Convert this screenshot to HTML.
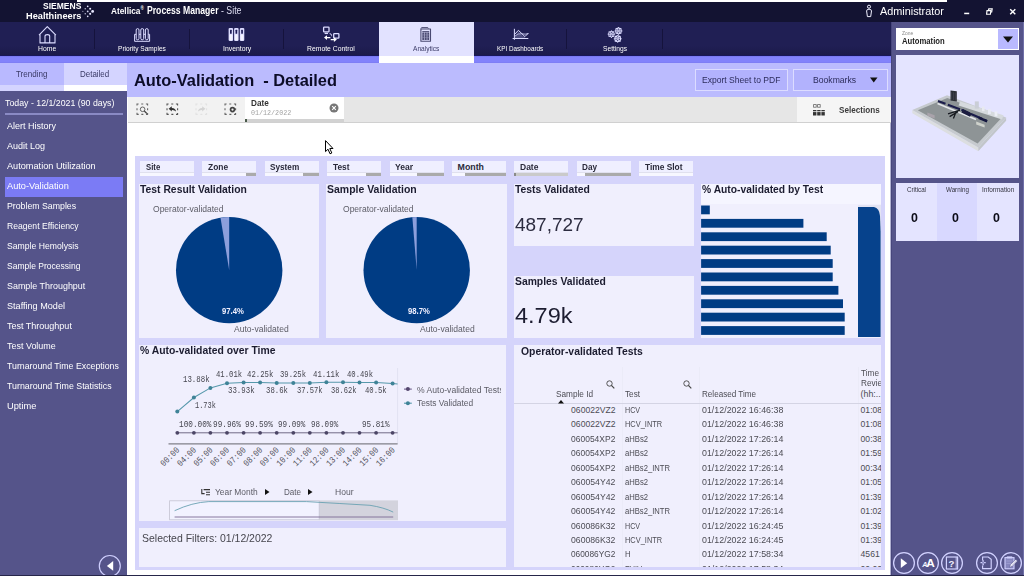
<!DOCTYPE html>
<html><head><meta charset="utf-8">
<style>
*{box-sizing:border-box;margin:0;padding:0}
html,body{width:1024px;height:576px;overflow:hidden;background:#fff;font-family:"Liberation Sans",sans-serif;}
.a{position:absolute}
.t{position:absolute;white-space:pre;line-height:1}
.m{font-family:"Liberation Mono",monospace}
#titlebar{left:0;top:0;width:1024px;height:22px;background:#131332}
#topwhite{left:77px;top:0;width:870px;height:2px;background:#fff}
#nav{left:0;top:22px;width:891px;height:34px;background:linear-gradient(#201f54 0,#201f54 70%,#1b1a4a 97%,#14126a 100%)}
#strip{left:0;top:56px;width:891px;height:7px;background:linear-gradient(#7474ee 0,#8282fb 1.5px,#8282fb 5.5px,#7c7cf2 7px)}
.sep{top:29px;width:1px;height:20px;background:#15133c}
#right{left:891px;top:22px;width:133px;height:553px;background:#55548a;border-left:1px solid #47467c;border-right:1.5px solid #7070a8}
#side{left:0;top:91px;width:127px;height:485px;background:#55548a}
#head{left:127px;top:63px;width:764px;height:34px;background:#bbbbfe}
#tool{left:128px;top:97px;width:763px;height:26px;background:#e6e6e6;border-bottom:1px solid #d0d0d0}
#dash{left:135px;top:156px;width:750px;height:414px;background:#d5d4fb}
.card{position:absolute;background:#f0effd}
.fb{position:absolute;top:161px;width:54px;height:15px;background:linear-gradient(#efefff 0,#efefff 11px,#e0e0ee 11px,#e0e0ee 12px,#f7f7ff 12px)}
.fb i{position:absolute;top:12px;right:0;height:3px;background:#a8a8a8}
.btn{position:absolute;top:69px;height:22px;border:1px solid #dcdcff;background:#b2b2fd;}
</style></head><body>
<div class="a" id="titlebar"></div>
<div class="a" id="topwhite"></div>
<div class="a" id="nav"></div>
<div class="a" id="strip"></div>
<div class="a" id="right"></div>
<div class="a" style="left:890px;top:97px;width:1px;height:478px;background:#b0b0d0"></div>
<div class="a" id="side"></div>
<div class="a" id="head"></div>
<div class="a" id="tool"></div>
<div class="a" id="dash"></div>

<div class="t" style="left:42.70px;top:2.27px;font-size:8.3px;color:#fff;font-weight:bold;transform:scaleX(1.0278);transform-origin:0 0;">SIEMENS</div>
<div class="t" style="left:25.70px;top:11.00px;font-size:9.8px;color:#fff;font-weight:bold;transform:scaleX(0.9418);transform-origin:0 0;">Healthineers</div>
<svg class="a" style="left:80px;top:3px" width="16" height="17" viewBox="80 3 16 17"><g fill="#e8e8ff"><circle cx="87.70" cy="6.30" r="0.85" opacity="1"/><circle cx="85.24" cy="8.76" r="0.75" opacity="0.8"/><circle cx="90.16" cy="8.76" r="1.05" opacity="1"/><circle cx="82.85" cy="11.40" r="0.6" opacity="0.6"/><circle cx="87.70" cy="11.40" r="0.9" opacity="0.9"/><circle cx="92.62" cy="11.40" r="1.4" opacity="1"/><circle cx="85.24" cy="13.86" r="0.75" opacity="0.8"/><circle cx="90.16" cy="13.86" r="1.05" opacity="1"/><circle cx="87.70" cy="16.32" r="0.85" opacity="0.95"/></g></svg>
<div class="t" style="left:111.00px;top:7.02px;font-size:8.6px;color:#fff;font-weight:bold;transform:scaleX(0.9643);transform-origin:0 0;">Atellica</div>
<div class="t" style="left:140.5px;top:6.5px;color:#fff;font-size:4.5px;font-weight:bold">®</div>
<div class="t" style="left:146.50px;top:5.84px;font-size:10px;color:#fff;font-weight:bold;transform:scaleX(0.8633);transform-origin:0 0;">Process Manager</div>
<div class="t" style="left:221.00px;top:5.84px;font-size:10px;color:#dcdcf0;transform:scaleX(0.8783);transform-origin:0 0;">- Site</div>
<svg class="a" style="left:864px;top:3px" width="10" height="16" viewBox="864 3 10 16"><g fill="none" stroke="#f0f0ff" stroke-width="1"><circle cx="869" cy="6.7" r="1.55"/><path d="M866.6 11 Q866.6 9.2 869 9.2 Q871.5 9.2 871.5 11 L870.7 16.6 H867.4 Z" stroke-linejoin="round"/></g></svg>
<div class="t" style="left:880.00px;top:5.55px;font-size:11.4px;color:#fff;transform:scaleX(0.9530);transform-origin:0 0;">Administrator</div>
<svg class="a" style="left:963px;top:11px" width="8" height="5" viewBox="963 11 8 5"><rect x="964.2" y="12.7" width="5" height="1.5" fill="#fff"/></svg>
<svg class="a" style="left:985px;top:7px" width="9" height="9" viewBox="985 7 9 9"><g fill="none" stroke="#fff" stroke-width="1.15"><path d="M988.4 10.4 L988.8 8.8 H992.2 L991.7 12 H990.8"/><path d="M987 10.6 H990.9 L990.4 14.2 H986.6 Z"/></g></svg>
<svg class="a" style="left:1009px;top:8px" width="8" height="8" viewBox="1009 8 8 8"><path d="M1010.2 9.2 L1015.3 14.2 M1015.3 9.2 L1010.2 14.2" stroke="#fff" stroke-width="1.4"/></svg>
<div class="a" style="left:379px;top:22px;width:95px;height:34px;background:#e2e2ff"></div>
<div class="a" style="left:379px;top:56px;width:95px;height:7px;background:#fff"></div>
<div class="t" style="left:38.20px;top:45.31px;font-size:7.9px;color:#fff;transform:scaleX(0.8636);transform-origin:0 0;">Home</div>
<div class="t" style="left:118.00px;top:45.31px;font-size:7.9px;color:#fff;transform:scaleX(0.8329);transform-origin:0 0;">Priority Samples</div>
<div class="t" style="left:222.50px;top:45.31px;font-size:7.9px;color:#fff;transform:scaleX(0.8678);transform-origin:0 0;">Inventory</div>
<div class="t" style="left:307.30px;top:45.31px;font-size:7.9px;color:#fff;transform:scaleX(0.8658);transform-origin:0 0;">Remote Control</div>
<div class="t" style="left:412.75px;top:45.31px;font-size:7.9px;color:#3a3a66;transform:scaleX(0.8320);transform-origin:0 0;">Analytics</div>
<div class="t" style="left:497.40px;top:45.31px;font-size:7.9px;color:#fff;transform:scaleX(0.8048);transform-origin:0 0;">KPI Dashboards</div>
<div class="t" style="left:603.15px;top:45.31px;font-size:7.9px;color:#fff;transform:scaleX(0.8443);transform-origin:0 0;">Settings</div>
<div class="a sep" style="left:94px"></div>
<div class="a sep" style="left:189px"></div>
<div class="a sep" style="left:283px"></div>
<div class="a sep" style="left:566px"></div>
<div class="a sep" style="left:662px"></div>
<svg class="a" style="left:0;top:22px" width="891" height="34" viewBox="0 22 891 34"><g fill="none" stroke="#dcdcff" stroke-width="1.1" stroke-linejoin="round"><path d="M39 35.2 L47.3 26.6 L55.9 35.2 M40 34.4 V42.9 H55 V34.4"/><path d="M45 42.9 V36.2 Q45 34.6 47.4 34.6 Q49.7 34.6 49.7 36.2 V42.9"/></g><g fill="none" stroke="#dcdcff" stroke-width="1"><rect x="136.2" y="28.6" width="2.8" height="11.2" rx="1.4"/><rect x="140.8" y="28.6" width="2.9" height="11.2" rx="1.4"/><rect x="145.4" y="28.6" width="2.8" height="11.2" rx="1.4"/><path d="M136.2 34.3 H134.6 V41.3 H149.6 V34.3 H148.2 M139 34.3 H140.8 M143.7 34.3 H145.4"/></g><rect x="228.6" y="27.9" width="4.5" height="13.1" rx="1.2" fill="#dcdcff"/><rect x="230.0" y="29.8" width="1.7" height="4" rx="0.5" fill="#1f1d57"/><rect x="229.5" y="34.6" width="2.7" height="5.6" rx="0.6" fill="#f4f4ff"/><rect x="234.1" y="27.9" width="4.5" height="13.1" rx="1.2" fill="#dcdcff"/><rect x="235.5" y="29.8" width="1.7" height="4" rx="0.5" fill="#1f1d57"/><rect x="235.0" y="34.6" width="2.7" height="5.6" rx="0.6" fill="#f4f4ff"/><rect x="239.8" y="27.9" width="4.5" height="13.1" rx="1.2" fill="#dcdcff"/><rect x="241.20000000000002" y="29.8" width="1.7" height="4" rx="0.5" fill="#1f1d57"/><rect x="240.70000000000002" y="34.6" width="2.7" height="5.6" rx="0.6" fill="#f4f4ff"/><g fill="none" stroke="#dcdcff" stroke-width="1.3"><rect x="323.6" y="27.2" width="5.4" height="4.6" rx="0.6"/><path d="M324.6 33.4 H328"/><rect x="333.7" y="33.6" width="5.2" height="4.6" rx="0.6"/><path d="M329.6 33.6 Q331.6 33.6 331.6 35.6 V36.2" stroke-width="1"/></g><g fill="#fff"><path d="M324 37.6 L327 35.2 V36.9 H330.4 V38.3 H327 V40 Z"/><path d="M336.9 39.6 L333.9 37.2 V38.9 H330.7 V40.3 H333.9 V42 Z"/></g><g fill="none" stroke="#4a4a72" stroke-width="1.1"><path d="M420.9 29 H430.5 V41.3 H420.9 Z" stroke-linejoin="round"/><path d="M421 28.6 L421.6 27.6 H427.8 L428.3 28.6" stroke-width="1"/><path d="M422.3 31.5 H429.2" stroke-width="0.9"/></g><rect x="422.3" y="32.4" width="6.9" height="7.6" fill="#4a4a72"/><path d="M424.45 32.4 V40 M427 32.4 V40" stroke="#e2e2ff" stroke-width="0.55"/><path d="M422.3 34.9 H429.2 M422.3 37.4 H429.2" stroke="#a0a0c0" stroke-width="0.45"/><g fill="none" stroke="#dcdcff" stroke-width="1"><path d="M514.4 28.8 V39.8 M512.6 38.5 H528.3"/><path d="M514.6 34.4 L518.4 30.3 L524.9 36.6 L528.3 33.2" stroke-linejoin="round"/><path d="M515 36 Q518 33.2 521.5 33.8 Q525.5 34.6 528.3 33.6" stroke-width="0.8"/></g><path d="M515 38 V35.5 L518.4 31.5 L523 36 L524.9 37.2 L525.5 38 Z" fill="#8a8ab8" opacity="0.45"/><circle cx="611.4" cy="34.1" r="3.2" fill="#dcdcff"/><circle cx="614.70" cy="34.10" r="0.55" fill="#dcdcff"/><circle cx="613.73" cy="36.43" r="0.55" fill="#dcdcff"/><circle cx="611.40" cy="37.40" r="0.55" fill="#dcdcff"/><circle cx="609.07" cy="36.43" r="0.55" fill="#dcdcff"/><circle cx="608.10" cy="34.10" r="0.55" fill="#dcdcff"/><circle cx="609.07" cy="31.77" r="0.55" fill="#dcdcff"/><circle cx="611.40" cy="30.80" r="0.55" fill="#dcdcff"/><circle cx="613.73" cy="31.77" r="0.55" fill="#dcdcff"/><circle cx="613.00" cy="35.02" r="0.62" fill="#1f1d57"/><circle cx="611.40" cy="35.95" r="0.62" fill="#1f1d57"/><circle cx="609.80" cy="35.02" r="0.62" fill="#1f1d57"/><circle cx="609.80" cy="33.18" r="0.62" fill="#1f1d57"/><circle cx="611.40" cy="32.25" r="0.62" fill="#1f1d57"/><circle cx="613.00" cy="33.17" r="0.62" fill="#1f1d57"/><circle cx="611.4" cy="34.1" r="0.95" fill="#a8a8cc"/><circle cx="618.5" cy="30.9" r="3.3" fill="#dcdcff"/><circle cx="621.90" cy="30.90" r="0.55" fill="#dcdcff"/><circle cx="620.90" cy="33.30" r="0.55" fill="#dcdcff"/><circle cx="618.50" cy="34.30" r="0.55" fill="#dcdcff"/><circle cx="616.10" cy="33.30" r="0.55" fill="#dcdcff"/><circle cx="615.10" cy="30.90" r="0.55" fill="#dcdcff"/><circle cx="616.10" cy="28.50" r="0.55" fill="#dcdcff"/><circle cx="618.50" cy="27.50" r="0.55" fill="#dcdcff"/><circle cx="620.90" cy="28.50" r="0.55" fill="#dcdcff"/><circle cx="620.10" cy="31.82" r="0.62" fill="#1f1d57"/><circle cx="618.50" cy="32.75" r="0.62" fill="#1f1d57"/><circle cx="616.90" cy="31.82" r="0.62" fill="#1f1d57"/><circle cx="616.90" cy="29.97" r="0.62" fill="#1f1d57"/><circle cx="618.50" cy="29.05" r="0.62" fill="#1f1d57"/><circle cx="620.10" cy="29.97" r="0.62" fill="#1f1d57"/><circle cx="618.5" cy="30.9" r="0.95" fill="#a8a8cc"/><circle cx="617.7" cy="38.7" r="3.4" fill="#dcdcff"/><circle cx="621.20" cy="38.70" r="0.55" fill="#dcdcff"/><circle cx="620.17" cy="41.17" r="0.55" fill="#dcdcff"/><circle cx="617.70" cy="42.20" r="0.55" fill="#dcdcff"/><circle cx="615.23" cy="41.17" r="0.55" fill="#dcdcff"/><circle cx="614.20" cy="38.70" r="0.55" fill="#dcdcff"/><circle cx="615.23" cy="36.23" r="0.55" fill="#dcdcff"/><circle cx="617.70" cy="35.20" r="0.55" fill="#dcdcff"/><circle cx="620.17" cy="36.23" r="0.55" fill="#dcdcff"/><circle cx="619.30" cy="39.62" r="0.62" fill="#1f1d57"/><circle cx="617.70" cy="40.55" r="0.62" fill="#1f1d57"/><circle cx="616.10" cy="39.62" r="0.62" fill="#1f1d57"/><circle cx="616.10" cy="37.78" r="0.62" fill="#1f1d57"/><circle cx="617.70" cy="36.85" r="0.62" fill="#1f1d57"/><circle cx="619.30" cy="37.77" r="0.62" fill="#1f1d57"/><circle cx="617.7" cy="38.7" r="0.95" fill="#a8a8cc"/></svg>
<div class="a" style="left:0;top:63px;width:64px;height:28px;background:#b9b9ff"></div>
<div class="a" style="left:0;top:85px;width:64px;height:6px;background:#d4d4ff"></div>
<div class="a" style="left:64px;top:63px;width:63px;height:28px;background:#d4d4ff"></div>
<div class="a" style="left:64px;top:85px;width:63px;height:6px;background:#fff"></div>
<div class="t" style="left:15.75px;top:69.55px;font-size:8.8px;color:#3a3a66;transform:scaleX(0.9155);transform-origin:0 0;">Trending</div>
<div class="t" style="left:80.40px;top:69.55px;font-size:8.8px;color:#3a3a66;transform:scaleX(0.9044);transform-origin:0 0;">Detailed</div>
<div class="t" style="left:4.80px;top:98.42px;font-size:9.9px;color:#fff;transform:scaleX(0.8899);transform-origin:0 0;">Today - 12/1/2021 (90 days)</div>
<div class="a" style="left:5px;top:113px;width:118px;height:1.5px;background:#8a8ac4"></div>
<div class="a" style="left:5px;top:176.5px;width:118px;height:20px;background:#7b7bf5"></div>
<div class="t" style="left:7.30px;top:121.40px;font-size:9.8px;color:#fff;transform:scaleX(0.9182);transform-origin:0 0;">Alert History</div>
<div class="t" style="left:7.30px;top:141.40px;font-size:9.8px;color:#fff;transform:scaleX(0.9200);transform-origin:0 0;">Audit Log</div>
<div class="t" style="left:7.30px;top:161.40px;font-size:9.8px;color:#fff;transform:scaleX(0.9358);transform-origin:0 0;">Automation Utilization</div>
<div class="t" style="left:7.30px;top:181.40px;font-size:9.8px;color:#fff;transform:scaleX(0.9401);transform-origin:0 0;">Auto-Validation</div>
<div class="t" style="left:7.30px;top:201.40px;font-size:9.8px;color:#fff;transform:scaleX(0.8934);transform-origin:0 0;">Problem Samples</div>
<div class="t" style="left:7.30px;top:221.40px;font-size:9.8px;color:#fff;transform:scaleX(0.8781);transform-origin:0 0;">Reagent Efficiency</div>
<div class="t" style="left:7.30px;top:241.40px;font-size:9.8px;color:#fff;transform:scaleX(0.8823);transform-origin:0 0;">Sample Hemolysis</div>
<div class="t" style="left:7.30px;top:261.40px;font-size:9.8px;color:#fff;transform:scaleX(0.8705);transform-origin:0 0;">Sample Processing</div>
<div class="t" style="left:7.30px;top:281.40px;font-size:9.8px;color:#fff;transform:scaleX(0.9115);transform-origin:0 0;">Sample Throughput</div>
<div class="t" style="left:7.30px;top:301.40px;font-size:9.8px;color:#fff;transform:scaleX(0.9284);transform-origin:0 0;">Staffing Model</div>
<div class="t" style="left:7.30px;top:321.40px;font-size:9.8px;color:#fff;transform:scaleX(0.9187);transform-origin:0 0;">Test Throughput</div>
<div class="t" style="left:7.30px;top:341.40px;font-size:9.8px;color:#fff;transform:scaleX(0.9141);transform-origin:0 0;">Test Volume</div>
<div class="t" style="left:7.30px;top:361.40px;font-size:9.8px;color:#fff;transform:scaleX(0.8957);transform-origin:0 0;">Turnaround Time Exceptions</div>
<div class="t" style="left:7.30px;top:381.40px;font-size:9.8px;color:#fff;transform:scaleX(0.9002);transform-origin:0 0;">Turnaround Time Statistics</div>
<div class="t" style="left:7.30px;top:401.40px;font-size:9.8px;color:#fff;transform:scaleX(0.9471);transform-origin:0 0;">Uptime</div>
<svg class="a" style="left:98px;top:553.5px" width="24" height="24" viewBox="0 0 24 24"><circle cx="11.8" cy="12" r="10.5" fill="none" stroke="#d0d0ff" stroke-width="1.2"/><path d="M15.2 7.1 V16.7 L8.9 11.9 Z" fill="#fff"/></svg>
<div class="t" style="left:134.40px;top:72.76px;font-size:16px;color:#0c0c28;font-weight:bold;transform:scaleX(1.0240);transform-origin:0 0;">Auto-Validation  - Detailed</div>
<div class="btn" style="left:695px;width:93px"></div>
<div class="t" style="left:702.40px;top:75.47px;font-size:9.6px;color:#2d2d5c;transform:scaleX(0.8905);transform-origin:0 0;">Export Sheet to PDF</div>
<div class="btn" style="left:793px;width:95px"></div>
<div class="t" style="left:812.50px;top:75.47px;font-size:9.6px;color:#2d2d5c;transform:scaleX(0.8976);transform-origin:0 0;">Bookmarks</div>
<svg class="a" style="left:869.5px;top:77px" width="8" height="6"><path d="M0 0.5 H7.5 L3.75 5.5 Z" fill="#111"/></svg>
<div class="a" style="left:128px;top:97px;width:117px;height:25px;background:#f2f2f2"></div>
<div class="a" style="left:245px;top:97px;width:99px;height:22px;background:#fff"></div>
<div class="a" style="left:245px;top:119px;width:99px;height:3px;background:#d2d2d2"></div>
<div class="a" style="left:245px;top:118.5px;width:1.6px;height:3.5px;background:#4a5a4a"></div>
<div class="a" style="left:797px;top:97px;width:94px;height:25px;background:#f5f5f5"></div>
<div class="t" style="left:251.10px;top:99.27px;font-size:8.9px;color:#333;font-weight:bold;transform:scaleX(0.9227);transform-origin:0 0;">Date</div>
<div class="t m" style="left:251.10px;top:109.66px;font-size:7.8px;color:#a2a2a2;transform:scaleX(0.8589);transform-origin:0 0;">01/12/2022</div>
<svg class="a" style="left:329px;top:103px" width="10" height="10" viewBox="0 0 10 10"><circle cx="5" cy="5" r="4.5" fill="#777"/><path d="M3.2 3.2 L6.8 6.8 M6.8 3.2 L3.2 6.8" stroke="#fff" stroke-width="1.1"/></svg>
<svg class="a" style="left:136px;top:103px" width="13" height="13" viewBox="0 0 13 13"><path d="M0.6 1 H12 M11.6 0.6 V11.8 M12 11.4 H0.6 M1 11.8 V0.6" fill="none" stroke="#666" stroke-width="1.1" stroke-dasharray="2 2.65"/><circle cx="6.6" cy="6.3" r="2.3" fill="#f2f2f2" stroke="#555" stroke-width="0.9"/><path d="M8.3 8.1 L10.8 10.4" stroke="#444" stroke-width="1.3"/></svg>
<svg class="a" style="left:165.6px;top:103px" width="13" height="13" viewBox="0 0 13 13"><path d="M0.6 1 H12 M11.6 0.6 V11.8 M12 11.4 H0.6 M1 11.8 V0.6" fill="none" stroke="#555" stroke-width="1.1" stroke-dasharray="2 2.65"/><path d="M2.6 5.8 L5.8 3.2 V4.9 Q9.6 4.8 10 8.6 Q8.4 6.7 5.8 6.9 V8.4 Z" fill="#333"/></svg>
<svg class="a" style="left:194.6px;top:103px" width="13" height="13" viewBox="0 0 13 13"><path d="M0.6 1 H12 M11.6 0.6 V11.8 M12 11.4 H0.6 M1 11.8 V0.6" fill="none" stroke="#e2e2e2" stroke-width="1.1" stroke-dasharray="2 2.65"/><path d="M10.4 5.8 L7.2 3.2 V4.9 Q3.4 4.8 3 8.6 Q4.6 6.7 7.2 6.9 V8.4 Z" fill="#d4d4d4"/></svg>
<svg class="a" style="left:224.4px;top:103px" width="13" height="13" viewBox="0 0 13 13"><path d="M0.6 1 H12 M11.6 0.6 V11.8 M12 11.4 H0.6 M1 11.8 V0.6" fill="none" stroke="#666" stroke-width="1.1" stroke-dasharray="2 2.65"/><circle cx="8.5" cy="6.6" r="2.8" fill="#444"/><circle cx="8.5" cy="6.6" r="1.1" fill="#f2f2f2"/></svg>
<svg class="a" style="left:813px;top:104px" width="12" height="12" viewBox="0 0 12 12"><g fill="none" stroke="#666" stroke-width="0.8"><rect x="0.6" y="0.6" width="2.6" height="2.6"/><rect x="4.6" y="0.6" width="2.6" height="2.6"/></g><g fill="#333"><rect x="0" y="6" width="3.4" height="5.5"/><rect x="4.2" y="6" width="3.4" height="5.5"/><rect x="8.4" y="6" width="3.4" height="5.5"/></g><path d="M0 7.6 H12" stroke="#f5f5f5" stroke-width="0.8"/></svg>
<div class="t" style="left:839.00px;top:105.77px;font-size:8.9px;color:#3c3c3c;font-weight:bold;transform:scaleX(0.9165);transform-origin:0 0;">Selections</div>
<svg class="a" style="left:324px;top:139px" width="11" height="17" viewBox="0 0 11 17"><path d="M1.5 1.6 V12.6 L4 10.2 L6 14.8 L7.8 14 L5.8 9.5 H9 Z" fill="#fff" stroke="#000" stroke-width="1"/></svg>
<div class="fb" style="left:140.0px"></div>
<div class="t" style="left:145.60px;top:163.05px;font-size:8.8px;color:#2a2a3a;font-weight:bold;transform:scaleX(0.8798);transform-origin:0 0;">Site</div>
<div class="fb" style="left:202.4px"><i style="width:10px;background:#aaa"></i></div>
<div class="t" style="left:208.00px;top:163.05px;font-size:8.8px;color:#2a2a3a;font-weight:bold;transform:scaleX(0.9562);transform-origin:0 0;">Zone</div>
<div class="fb" style="left:264.8px"><i style="width:16px;background:#aaa"></i></div>
<div class="t" style="left:270.40px;top:163.05px;font-size:8.8px;color:#2a2a3a;font-weight:bold;transform:scaleX(0.9327);transform-origin:0 0;">System</div>
<div class="fb" style="left:327.2px"><i style="width:15px;background:#aaa"></i></div>
<div class="t" style="left:332.80px;top:163.05px;font-size:8.8px;color:#2a2a3a;font-weight:bold;transform:scaleX(0.9460);transform-origin:0 0;">Test</div>
<div class="fb" style="left:389.6px"><i style="width:27px;background:#aaa"></i></div>
<div class="t" style="left:395.20px;top:163.05px;font-size:8.8px;color:#2a2a3a;font-weight:bold;transform:scaleX(0.9786);transform-origin:0 0;">Year</div>
<div class="fb" style="left:452.0px"><i style="width:41px;background:#aaa"></i></div>
<div class="t" style="left:457.60px;top:163.05px;font-size:8.8px;color:#2a2a3a;font-weight:bold;">Month</div>
<div class="fb" style="left:514.4px"><i style="width:54px;background:#cacaca"></i><i style="width:2px;background:#8a8a8a;right:auto;left:0"></i></div>
<div class="t" style="left:520.00px;top:163.05px;font-size:8.8px;color:#2a2a3a;font-weight:bold;transform:scaleX(0.9646);transform-origin:0 0;">Date</div>
<div class="fb" style="left:576.8px"><i style="width:46px;background:#aaa"></i></div>
<div class="t" style="left:582.40px;top:163.05px;font-size:8.8px;color:#2a2a3a;font-weight:bold;transform:scaleX(0.9291);transform-origin:0 0;">Day</div>
<div class="fb" style="left:639.2px"></div>
<div class="t" style="left:644.80px;top:163.05px;font-size:8.8px;color:#2a2a3a;font-weight:bold;transform:scaleX(0.9507);transform-origin:0 0;">Time Slot</div>
<div class="card" style="left:139px;top:184px;width:180px;height:153.5px"></div>
<div class="card" style="left:326px;top:184px;width:181px;height:153.5px"></div>
<svg class="a" style="left:135px;top:156px" width="380" height="190" viewBox="135 156 380 190"><circle cx="229.2" cy="270.15" r="53.2" fill="#003c84"/><path d="M229.2 270.15 L220.51 217.66 A53.2 53.2 0 0 1 229.2 216.95 Z" fill="#8c9fdc"/><circle cx="416.7" cy="270.15" r="53.2" fill="#003c84"/><path d="M416.7 270.15 L412.34 217.13 A53.2 53.2 0 0 1 416.7 216.95 Z" fill="#8c9fdc"/></svg>
<div class="t" style="left:140.00px;top:185.34px;font-size:10.0px;color:#1c1c30;font-weight:bold;transform:scaleX(1.0352);transform-origin:0 0;">Test Result Validation</div>
<div class="t" style="left:327.00px;top:185.34px;font-size:10.0px;color:#1c1c30;font-weight:bold;transform:scaleX(1.0481);transform-origin:0 0;">Sample Validation</div>
<div class="t" style="left:153.30px;top:204.77px;font-size:8.9px;color:#5c5c66;transform:scaleX(0.9605);transform-origin:0 0;">Operator-validated</div>
<div class="t" style="left:343.00px;top:204.77px;font-size:8.9px;color:#5c5c66;transform:scaleX(0.9605);transform-origin:0 0;">Operator-validated</div>
<div class="t" style="left:234.30px;top:324.97px;font-size:8.9px;color:#5c5c66;transform:scaleX(0.9631);transform-origin:0 0;">Auto-validated</div>
<div class="t" style="left:419.50px;top:324.97px;font-size:8.9px;color:#5c5c66;transform:scaleX(0.9631);transform-origin:0 0;">Auto-validated</div>
<div class="t" style="left:221.70px;top:307.38px;font-size:9px;color:#f0f0ff;font-weight:bold;transform:scaleX(0.8582);transform-origin:0 0;">97.4%</div>
<div class="t" style="left:407.50px;top:307.38px;font-size:9px;color:#f0f0ff;font-weight:bold;transform:scaleX(0.8582);transform-origin:0 0;">98.7%</div>
<div class="card" style="left:514px;top:184px;width:180px;height:62px"></div>
<div class="card" style="left:514px;top:276px;width:180px;height:62px"></div>
<div class="t" style="left:514.50px;top:185.34px;font-size:10.0px;color:#1c1c30;font-weight:bold;transform:scaleX(1.0379);transform-origin:0 0;">Tests Validated</div>
<div class="t" style="left:514.50px;top:277.34px;font-size:10.0px;color:#1c1c30;font-weight:bold;transform:scaleX(1.0351);transform-origin:0 0;">Samples Validated</div>
<div class="t" style="left:514.50px;top:216.39px;font-size:18.2px;color:#2c2c40;transform:scaleX(1.0442);transform-origin:0 0;">487,727</div>
<div class="t" style="left:514.50px;top:306.40px;font-size:21.5px;color:#1c1c30;transform:scaleX(1.0932);transform-origin:0 0;">4.79k</div>
<div class="card" style="left:701px;top:184px;width:180px;height:153.5px"></div>
<div class="a" style="left:701px;top:184px;width:180px;height:20px;background:#f5f5ff"></div>
<div class="t" style="left:702.30px;top:185.34px;font-size:10.0px;color:#1c1c30;font-weight:bold;transform:scaleX(1.0289);transform-origin:0 0;">% Auto-validated by Test</div>
<svg class="a" style="left:700px;top:200px" width="160" height="140" viewBox="700 200 160 140"><rect x="701.1" y="205.50" width="8.7" height="8.8" fill="#003c84"/><rect x="701.1" y="218.90" width="102.3" height="8.8" fill="#003c84"/><rect x="701.1" y="232.30" width="125.6" height="8.8" fill="#003c84"/><rect x="701.1" y="245.70" width="129.6" height="8.8" fill="#003c84"/><rect x="701.1" y="259.10" width="131.6" height="8.8" fill="#003c84"/><rect x="701.1" y="272.50" width="131.6" height="8.8" fill="#003c84"/><rect x="701.1" y="285.90" width="137.3" height="8.8" fill="#003c84"/><rect x="701.1" y="299.30" width="141.9" height="8.8" fill="#003c84"/><rect x="701.1" y="312.70" width="143.6" height="8.8" fill="#003c84"/><rect x="701.1" y="326.10" width="143.6" height="8.8" fill="#003c84"/></svg>
<div class="a" style="left:858px;top:204.7px;width:22.6px;height:132.8px;background:#e2e3f3"></div>
<svg class="a" style="left:858px;top:206px" width="23" height="131" viewBox="0 0 23 131"><path d="M0 1.1 H16 Q21.3 2 22 10 L22.6 26 V131.5 H0 Z" fill="#06428c"/></svg>
<div class="card" style="left:139px;top:344.5px;width:367px;height:176.2px"></div>
<div class="t" style="left:139.70px;top:346.44px;font-size:10.0px;color:#1c1c30;font-weight:bold;transform:scaleX(1.0376);transform-origin:0 0;">% Auto-validated over Time</div>
<svg class="a" style="left:139px;top:344px" width="367" height="177" viewBox="139 344 367 177"><path d="M397.6 368 V444" stroke="#e2e2f2" stroke-width="1"/><polyline points="177.3,411.6 193.9,397.5 210.4,387.9 227.0,383.2 243.6,382.5 260.1,382.5 276.7,382.9 293.3,382.9 309.8,382.9 326.4,382.3 343.0,382.3 359.5,382.4 376.1,382.5 392.6,383.6 397.6,383.9" fill="none" stroke="#5598ab" stroke-width="1.05"/><circle cx="177.3" cy="411.6" r="2" fill="#3f8397"/><circle cx="193.9" cy="397.5" r="2" fill="#3f8397"/><circle cx="210.4" cy="387.9" r="2" fill="#3f8397"/><circle cx="227.0" cy="383.2" r="2" fill="#3f8397"/><circle cx="243.6" cy="382.5" r="2" fill="#3f8397"/><circle cx="260.1" cy="382.5" r="2" fill="#3f8397"/><circle cx="276.7" cy="382.9" r="2" fill="#3f8397"/><circle cx="293.3" cy="382.9" r="2" fill="#3f8397"/><circle cx="309.8" cy="382.9" r="2" fill="#3f8397"/><circle cx="326.4" cy="382.3" r="2" fill="#3f8397"/><circle cx="343.0" cy="382.3" r="2" fill="#3f8397"/><circle cx="359.5" cy="382.4" r="2" fill="#3f8397"/><circle cx="376.1" cy="382.5" r="2" fill="#3f8397"/><circle cx="392.6" cy="383.6" r="2" fill="#3f8397"/><path d="M176 432.8 H397.6" stroke="#6b6482" stroke-width="0.95"/><circle cx="177.3" cy="432.8" r="1.9" fill="#4c4666"/><circle cx="193.9" cy="432.8" r="1.9" fill="#4c4666"/><circle cx="210.4" cy="432.8" r="1.9" fill="#4c4666"/><circle cx="227.0" cy="432.8" r="1.9" fill="#4c4666"/><circle cx="243.6" cy="432.8" r="1.9" fill="#4c4666"/><circle cx="260.1" cy="432.8" r="1.9" fill="#4c4666"/><circle cx="276.7" cy="432.8" r="1.9" fill="#4c4666"/><circle cx="293.3" cy="432.8" r="1.9" fill="#4c4666"/><circle cx="309.8" cy="432.8" r="1.9" fill="#4c4666"/><circle cx="326.4" cy="432.8" r="1.9" fill="#4c4666"/><circle cx="343.0" cy="432.8" r="1.9" fill="#4c4666"/><circle cx="359.5" cy="432.8" r="1.9" fill="#4c4666"/><circle cx="376.1" cy="432.8" r="1.9" fill="#4c4666"/><circle cx="392.6" cy="432.8" r="1.9" fill="#4c4666"/><path d="M168.5 443.9 H397.6" stroke="#808088" stroke-width="1.3"/><path d="M404 389.1 H411.8" stroke="#6a5a88" stroke-width="1.1"/><circle cx="407.9" cy="389.1" r="2" fill="#54466e"/><path d="M404 403.2 H411.8" stroke="#4f94a8" stroke-width="1.1"/><circle cx="407.9" cy="403.2" r="2" fill="#3f8397"/><rect x="319.2" y="500.4" width="78.8" height="19.8" fill="#d3d3dd"/><rect x="169.6" y="500.8" width="149.6" height="19" fill="#f2f2ff" stroke="#c4c4d2" stroke-width="0.8"/><path d="M174.6 510.7 Q192 502.5 208.8 501.6 L306.5 501.6 Q340 503.5 370 505.3 Q384 507.5 393.2 512.1" fill="none" stroke="#6aa2b2" stroke-width="0.9"/><path d="M174.6 517 H393.2" stroke="#7a6a94" stroke-width="0.9"/><text x="180.1" y="450.6" text-anchor="end" transform="rotate(-45 180.1 450.6)" font-family="Liberation Mono" font-size="9" textLength="23" lengthAdjust="spacingAndGlyphs" fill="#52525c">00:00</text><text x="196.7" y="450.6" text-anchor="end" transform="rotate(-45 196.7 450.6)" font-family="Liberation Mono" font-size="9" textLength="23" lengthAdjust="spacingAndGlyphs" fill="#52525c">04:00</text><text x="213.2" y="450.6" text-anchor="end" transform="rotate(-45 213.2 450.6)" font-family="Liberation Mono" font-size="9" textLength="23" lengthAdjust="spacingAndGlyphs" fill="#52525c">05:00</text><text x="229.8" y="450.6" text-anchor="end" transform="rotate(-45 229.8 450.6)" font-family="Liberation Mono" font-size="9" textLength="23" lengthAdjust="spacingAndGlyphs" fill="#52525c">06:00</text><text x="246.4" y="450.6" text-anchor="end" transform="rotate(-45 246.4 450.6)" font-family="Liberation Mono" font-size="9" textLength="23" lengthAdjust="spacingAndGlyphs" fill="#52525c">07:00</text><text x="262.9" y="450.6" text-anchor="end" transform="rotate(-45 262.9 450.6)" font-family="Liberation Mono" font-size="9" textLength="23" lengthAdjust="spacingAndGlyphs" fill="#52525c">08:00</text><text x="279.5" y="450.6" text-anchor="end" transform="rotate(-45 279.5 450.6)" font-family="Liberation Mono" font-size="9" textLength="23" lengthAdjust="spacingAndGlyphs" fill="#52525c">09:00</text><text x="296.1" y="450.6" text-anchor="end" transform="rotate(-45 296.1 450.6)" font-family="Liberation Mono" font-size="9" textLength="23" lengthAdjust="spacingAndGlyphs" fill="#52525c">10:00</text><text x="312.6" y="450.6" text-anchor="end" transform="rotate(-45 312.6 450.6)" font-family="Liberation Mono" font-size="9" textLength="23" lengthAdjust="spacingAndGlyphs" fill="#52525c">11:00</text><text x="329.2" y="450.6" text-anchor="end" transform="rotate(-45 329.2 450.6)" font-family="Liberation Mono" font-size="9" textLength="23" lengthAdjust="spacingAndGlyphs" fill="#52525c">12:00</text><text x="345.8" y="450.6" text-anchor="end" transform="rotate(-45 345.8 450.6)" font-family="Liberation Mono" font-size="9" textLength="23" lengthAdjust="spacingAndGlyphs" fill="#52525c">13:00</text><text x="362.3" y="450.6" text-anchor="end" transform="rotate(-45 362.3 450.6)" font-family="Liberation Mono" font-size="9" textLength="23" lengthAdjust="spacingAndGlyphs" fill="#52525c">14:00</text><text x="378.9" y="450.6" text-anchor="end" transform="rotate(-45 378.9 450.6)" font-family="Liberation Mono" font-size="9" textLength="23" lengthAdjust="spacingAndGlyphs" fill="#52525c">15:00</text><text x="395.4" y="450.6" text-anchor="end" transform="rotate(-45 395.4 450.6)" font-family="Liberation Mono" font-size="9" textLength="23" lengthAdjust="spacingAndGlyphs" fill="#52525c">16:00</text></svg>
<div class="t m" style="left:183.30px;top:376.00px;font-size:9.0px;color:#46464f;transform:scaleX(0.8209);transform-origin:0 0;">13.88k</div>
<div class="t m" style="left:216.20px;top:370.80px;font-size:9.0px;color:#46464f;transform:scaleX(0.8055);transform-origin:0 0;">41.01k</div>
<div class="t m" style="left:247.00px;top:370.80px;font-size:9.0px;color:#46464f;transform:scaleX(0.8116);transform-origin:0 0;">42.25k</div>
<div class="t m" style="left:280.40px;top:370.80px;font-size:9.0px;color:#46464f;transform:scaleX(0.8024);transform-origin:0 0;">39.25k</div>
<div class="t m" style="left:313.40px;top:370.80px;font-size:9.0px;color:#46464f;transform:scaleX(0.8147);transform-origin:0 0;">41.11k</div>
<div class="t m" style="left:346.60px;top:370.80px;font-size:9.0px;color:#46464f;transform:scaleX(0.8024);transform-origin:0 0;">40.49k</div>
<div class="t m" style="left:228.20px;top:387.30px;font-size:9.0px;color:#46464f;transform:scaleX(0.8209);transform-origin:0 0;">33.93k</div>
<div class="t m" style="left:265.90px;top:387.30px;font-size:9.0px;color:#46464f;transform:scaleX(0.8110);transform-origin:0 0;">38.6k</div>
<div class="t m" style="left:297.10px;top:387.30px;font-size:9.0px;color:#46464f;transform:scaleX(0.7900);transform-origin:0 0;">37.57k</div>
<div class="t m" style="left:330.50px;top:387.30px;font-size:9.0px;color:#46464f;transform:scaleX(0.7838);transform-origin:0 0;">38.62k</div>
<div class="t m" style="left:365.20px;top:387.30px;font-size:9.0px;color:#46464f;transform:scaleX(0.8036);transform-origin:0 0;">40.5k</div>
<div class="t m" style="left:195.40px;top:402.00px;font-size:9.0px;color:#46464f;transform:scaleX(0.7703);transform-origin:0 0;">1.73k</div>
<div class="t m" style="left:178.70px;top:421.30px;font-size:9.0px;color:#46464f;transform:scaleX(0.8597);transform-origin:0 0;">100.00%</div>
<div class="t m" style="left:213.00px;top:421.30px;font-size:9.0px;color:#46464f;transform:scaleX(0.8579);transform-origin:0 0;">99.96%</div>
<div class="t m" style="left:244.60px;top:421.30px;font-size:9.0px;color:#46464f;transform:scaleX(0.8579);transform-origin:0 0;">99.59%</div>
<div class="t m" style="left:278.00px;top:421.30px;font-size:9.0px;color:#46464f;transform:scaleX(0.8456);transform-origin:0 0;">99.09%</div>
<div class="t m" style="left:311.20px;top:421.30px;font-size:9.0px;color:#46464f;transform:scaleX(0.8394);transform-origin:0 0;">98.09%</div>
<div class="t m" style="left:362.40px;top:421.30px;font-size:9.0px;color:#46464f;transform:scaleX(0.8487);transform-origin:0 0;">95.81%</div>
<div class="a" style="left:416px;top:383px;width:84.6px;height:13px;overflow:hidden">
<div class="t" style="left:1.10px;top:2.57px;font-size:8.9px;color:#5c5c66;transform:scaleX(0.9680);transform-origin:0 0;">% Auto-validated Tests</div>
</div>
<div class="t" style="left:417.10px;top:399.47px;font-size:8.9px;color:#5c5c66;transform:scaleX(0.9431);transform-origin:0 0;">Tests Validated</div>
<svg class="a" style="left:200.5px;top:489px" width="10" height="7" viewBox="0 0 10 7"><path d="M0.8 0 V4.6 H3.6 M2.6 0.6 H9 M5 3.2 H9 M5 5.8 H9" fill="none" stroke="#333" stroke-width="1.1"/></svg>
<div class="t" style="left:214.90px;top:488.07px;font-size:8.9px;color:#5c5c66;transform:scaleX(0.9471);transform-origin:0 0;">Year Month</div>
<svg class="a" style="left:265px;top:489.2px" width="5" height="6"><path d="M0 0 L4.5 3 L0 6 Z" fill="#111"/></svg>
<div class="t" style="left:283.80px;top:488.07px;font-size:8.9px;color:#5c5c66;transform:scaleX(0.9096);transform-origin:0 0;">Date</div>
<svg class="a" style="left:307.7px;top:489.2px" width="5" height="6"><path d="M0 0 L4.5 3 L0 6 Z" fill="#111"/></svg>
<div class="t" style="left:335.00px;top:488.07px;font-size:8.9px;color:#5c5c66;transform:scaleX(0.9642);transform-origin:0 0;">Hour</div>
<div class="card" style="left:139px;top:527.8px;width:367px;height:39px"></div>
<div class="t" style="left:142.30px;top:532.93px;font-size:10.6px;color:#46464e;transform:scaleX(0.9887);transform-origin:0 0;">Selected Filters: 01/12/2022</div>
<div class="card" style="left:514px;top:344.5px;width:367px;height:222.5px"></div>
<div class="t" style="left:521.10px;top:346.54px;font-size:10.0px;color:#1c1c30;font-weight:bold;transform:scaleX(1.0395);transform-origin:0 0;">Operator-validated Tests</div>
<div class="a" style="left:621.7px;top:367px;width:1px;height:200px;background:#ebebf8"></div>
<div class="a" style="left:698.8px;top:367px;width:1px;height:200px;background:#ebebf8"></div>
<div class="a" style="left:858px;top:367px;width:1px;height:200px;background:#ebebf8"></div>
<div class="a" style="left:514px;top:403px;width:367px;height:1px;background:#d4d4e4"></div>
<div class="t" style="left:555.90px;top:389.55px;font-size:8.8px;color:#4c4c54;transform:scaleX(0.9363);transform-origin:0 0;">Sample Id</div>
<div class="t" style="left:624.80px;top:389.55px;font-size:8.8px;color:#4c4c54;transform:scaleX(0.9294);transform-origin:0 0;">Test</div>
<div class="t" style="left:701.80px;top:389.55px;font-size:8.8px;color:#4c4c54;transform:scaleX(0.9217);transform-origin:0 0;">Released Time</div>
<div class="a" style="left:858px;top:366px;width:23px;height:201px;overflow:hidden" id="lc">
<div class="t" style="left:2.60px;top:2.65px;font-size:8.8px;color:#4c4c54;transform:scaleX(0.9361);transform-origin:0 0;">Time</div>
<div class="t" style="left:2.60px;top:13.05px;font-size:8.8px;color:#4c4c54;transform:scaleX(0.9334);transform-origin:0 0;">Revie</div>
<div class="t" style="left:2.60px;top:23.55px;font-size:8.8px;color:#4c4c54;">(hh:..</div>
<div class="t" style="left:2.60px;top:39.92px;font-size:8.6px;color:#4c4c54;">01:08</div>
<div class="t" style="left:2.60px;top:54.37px;font-size:8.6px;color:#4c4c54;">01:08</div>
<div class="t" style="left:2.60px;top:68.82px;font-size:8.6px;color:#4c4c54;">00:38</div>
<div class="t" style="left:2.60px;top:83.27px;font-size:8.6px;color:#4c4c54;">01:59</div>
<div class="t" style="left:2.60px;top:97.72px;font-size:8.6px;color:#4c4c54;">00:34</div>
<div class="t" style="left:2.60px;top:112.17px;font-size:8.6px;color:#4c4c54;">01:05</div>
<div class="t" style="left:2.60px;top:126.62px;font-size:8.6px;color:#4c4c54;">01:39</div>
<div class="t" style="left:2.60px;top:141.07px;font-size:8.6px;color:#4c4c54;">01:02</div>
<div class="t" style="left:2.60px;top:155.52px;font-size:8.6px;color:#4c4c54;">01:39</div>
<div class="t" style="left:2.60px;top:169.97px;font-size:8.6px;color:#4c4c54;">01:39</div>
<div class="t" style="left:2.60px;top:184.42px;font-size:8.6px;color:#4c4c54;">4561</div>
<div class="t" style="left:2.60px;top:198.87px;font-size:8.6px;color:#4c4c54;">00:00</div>
</div>
<svg class="a" style="left:606px;top:380px" width="9" height="9" viewBox="0 0 9 9"><circle cx="3.5" cy="3.5" r="2.7" fill="none" stroke="#444" stroke-width="0.9"/><path d="M5.4 5.4 L8.3 8.3" stroke="#444" stroke-width="1.2"/></svg>
<svg class="a" style="left:683.3px;top:380px" width="9" height="9" viewBox="0 0 9 9"><circle cx="3.5" cy="3.5" r="2.7" fill="none" stroke="#444" stroke-width="0.9"/><path d="M5.4 5.4 L8.3 8.3" stroke="#444" stroke-width="1.2"/></svg>
<svg class="a" style="left:557.8px;top:400px" width="6" height="4"><path d="M0 3.6 L3 0 L6 3.6 Z" fill="#111"/></svg>
<div class="a" style="left:514px;top:404px;width:344px;height:163px;overflow:hidden">
<div class="t" style="left:57.10px;top:1.92px;font-size:8.6px;color:#4c4c54;">060022VZ2</div>
<div class="t" style="left:110.80px;top:1.92px;font-size:8.6px;color:#4c4c54;transform:scaleX(0.8316);transform-origin:0 0;">HCV</div>
<div class="t" style="left:187.80px;top:1.92px;font-size:8.6px;color:#4c4c54;transform:scaleX(1.0316);transform-origin:0 0;">01/12/2022 16:46:38</div>
<div class="t" style="left:57.10px;top:16.37px;font-size:8.6px;color:#4c4c54;">060022VZ2</div>
<div class="t" style="left:110.80px;top:16.37px;font-size:8.6px;color:#4c4c54;transform:scaleX(0.8650);transform-origin:0 0;">HCV_INTR</div>
<div class="t" style="left:187.80px;top:16.37px;font-size:8.6px;color:#4c4c54;transform:scaleX(1.0316);transform-origin:0 0;">01/12/2022 16:46:38</div>
<div class="t" style="left:57.10px;top:30.82px;font-size:8.6px;color:#4c4c54;transform:scaleX(0.9877);transform-origin:0 0;">060054XP2</div>
<div class="t" style="left:110.80px;top:30.82px;font-size:8.6px;color:#4c4c54;transform:scaleX(0.8949);transform-origin:0 0;">aHBs2</div>
<div class="t" style="left:187.80px;top:30.82px;font-size:8.6px;color:#4c4c54;transform:scaleX(1.0316);transform-origin:0 0;">01/12/2022 17:26:14</div>
<div class="t" style="left:57.10px;top:45.27px;font-size:8.6px;color:#4c4c54;transform:scaleX(0.9877);transform-origin:0 0;">060054XP2</div>
<div class="t" style="left:110.80px;top:45.27px;font-size:8.6px;color:#4c4c54;transform:scaleX(0.8949);transform-origin:0 0;">aHBs2</div>
<div class="t" style="left:187.80px;top:45.27px;font-size:8.6px;color:#4c4c54;transform:scaleX(1.0316);transform-origin:0 0;">01/12/2022 17:26:14</div>
<div class="t" style="left:57.10px;top:59.72px;font-size:8.6px;color:#4c4c54;transform:scaleX(0.9877);transform-origin:0 0;">060054XP2</div>
<div class="t" style="left:110.80px;top:59.72px;font-size:8.6px;color:#4c4c54;transform:scaleX(0.8883);transform-origin:0 0;">aHBs2_INTR</div>
<div class="t" style="left:187.80px;top:59.72px;font-size:8.6px;color:#4c4c54;transform:scaleX(1.0316);transform-origin:0 0;">01/12/2022 17:26:14</div>
<div class="t" style="left:57.10px;top:74.17px;font-size:8.6px;color:#4c4c54;transform:scaleX(1.0091);transform-origin:0 0;">060054Y42</div>
<div class="t" style="left:110.80px;top:74.17px;font-size:8.6px;color:#4c4c54;transform:scaleX(0.8949);transform-origin:0 0;">aHBs2</div>
<div class="t" style="left:187.80px;top:74.17px;font-size:8.6px;color:#4c4c54;transform:scaleX(1.0316);transform-origin:0 0;">01/12/2022 17:26:14</div>
<div class="t" style="left:57.10px;top:88.62px;font-size:8.6px;color:#4c4c54;transform:scaleX(1.0091);transform-origin:0 0;">060054Y42</div>
<div class="t" style="left:110.80px;top:88.62px;font-size:8.6px;color:#4c4c54;transform:scaleX(0.8949);transform-origin:0 0;">aHBs2</div>
<div class="t" style="left:187.80px;top:88.62px;font-size:8.6px;color:#4c4c54;transform:scaleX(1.0316);transform-origin:0 0;">01/12/2022 17:26:14</div>
<div class="t" style="left:57.10px;top:103.07px;font-size:8.6px;color:#4c4c54;transform:scaleX(1.0091);transform-origin:0 0;">060054Y42</div>
<div class="t" style="left:110.80px;top:103.07px;font-size:8.6px;color:#4c4c54;transform:scaleX(0.8883);transform-origin:0 0;">aHBs2_INTR</div>
<div class="t" style="left:187.80px;top:103.07px;font-size:8.6px;color:#4c4c54;transform:scaleX(1.0316);transform-origin:0 0;">01/12/2022 17:26:14</div>
<div class="t" style="left:57.10px;top:117.52px;font-size:8.6px;color:#4c4c54;transform:scaleX(1.0091);transform-origin:0 0;">060086K32</div>
<div class="t" style="left:110.80px;top:117.52px;font-size:8.6px;color:#4c4c54;transform:scaleX(0.8316);transform-origin:0 0;">HCV</div>
<div class="t" style="left:187.80px;top:117.52px;font-size:8.6px;color:#4c4c54;transform:scaleX(1.0316);transform-origin:0 0;">01/12/2022 16:24:45</div>
<div class="t" style="left:57.10px;top:131.97px;font-size:8.6px;color:#4c4c54;transform:scaleX(1.0091);transform-origin:0 0;">060086K32</div>
<div class="t" style="left:110.80px;top:131.97px;font-size:8.6px;color:#4c4c54;transform:scaleX(0.8650);transform-origin:0 0;">HCV_INTR</div>
<div class="t" style="left:187.80px;top:131.97px;font-size:8.6px;color:#4c4c54;transform:scaleX(1.0316);transform-origin:0 0;">01/12/2022 16:24:45</div>
<div class="t" style="left:57.10px;top:146.42px;font-size:8.6px;color:#4c4c54;transform:scaleX(0.9672);transform-origin:0 0;">060086YG2</div>
<div class="t" style="left:110.80px;top:146.42px;font-size:8.6px;color:#4c4c54;transform:scaleX(0.9017);transform-origin:0 0;">H</div>
<div class="t" style="left:187.80px;top:146.42px;font-size:8.6px;color:#4c4c54;transform:scaleX(1.0316);transform-origin:0 0;">01/12/2022 17:58:34</div>
<div class="t" style="left:57.10px;top:160.87px;font-size:8.6px;color:#4c4c54;transform:scaleX(0.9672);transform-origin:0 0;">060086YG2</div>
<div class="t" style="left:110.80px;top:160.87px;font-size:8.6px;color:#4c4c54;transform:scaleX(0.8469);transform-origin:0 0;">EHIV</div>
<div class="t" style="left:187.80px;top:160.87px;font-size:8.6px;color:#4c4c54;transform:scaleX(1.0316);transform-origin:0 0;">01/12/2022 17:58:34</div>
</div>
<div class="a" style="left:896px;top:28px;width:123px;height:22px;background:#fff"></div>
<div class="a" style="left:998px;top:29px;width:20px;height:20px;background:#b9b9ff"></div>
<svg class="a" style="left:1003px;top:36px" width="10" height="7"><path d="M0 0.5 H10 L5 6.5 Z" fill="#111"/></svg>
<div class="t" style="left:902.00px;top:30.73px;font-size:5.4px;color:#8a8a8a;transform:scaleX(0.9181);transform-origin:0 0;">Zone</div>
<div class="t" style="left:901.50px;top:36.82px;font-size:8.6px;color:#222;font-weight:bold;transform:scaleX(0.8938);transform-origin:0 0;">Automation</div>
<div class="a" style="left:896px;top:55px;width:123px;height:122.5px;background:#e4e4ff"></div>
<svg class="a" style="left:896px;top:55px" width="123" height="123" viewBox="896 55 123 123">
<defs><filter id="bl" x="-10%" y="-10%" width="120%" height="120%"><feGaussianBlur stdDeviation="0.45"/></filter></defs>
<g filter="url(#bl)">
<path d="M912.3 109.9 L978.3 147.4 L978.3 151.2 L912.3 113.2 Z" fill="#dcdee0"/>
<path d="M978.3 147.4 L1006.1 117.5 L1006.1 120.8 L978.3 151.2 Z" fill="#c2c6ca"/>
<path d="M912.3 109.9 L947 95.3 L1006.1 117.5 L978.3 147.4 Z" fill="#c6cace"/>
<path d="M917.8 110.2 L947.3 98 L1001.2 118.2 L977.6 143.6 Z" fill="#8e9496"/>
<path d="M960 101.6 L1003.5 115.2 L1002 119.4 L958.6 105.6 Z" fill="#d6dade"/>
<path d="M937.5 103.4 L976 119.6" stroke="#e4e6ea" stroke-width="1.6" fill="none"/>
<path d="M938 101 L962 110 L987 121" stroke="#1a1e4c" stroke-width="2.1" fill="none" stroke-dasharray="8 2.5 13 1.5 9 1.5 12 2 20"/>
<path d="M950.5 90.4 L956.8 91.2 V101.4 L950.5 100.4 Z" fill="#2c2e36"/>
<path d="M951.6 92 V99.6 M953.5 92.3 V100 M955.4 92.6 V100.4" stroke="#4a4c58" stroke-width="0.5"/>
<rect x="974.8" y="101.4" width="4" height="7.2" fill="#caced6"/>
<rect x="982" y="106.6" width="2.6" height="4.6" fill="#e8eaf0"/><rect x="988" y="109" width="2.8" height="5" fill="#e8eaf4"/><rect x="994.6" y="111.4" width="2.8" height="5" fill="#eceef6"/>
<path d="M948 113.8 L960 110.2 M949.6 116.6 L958 111.6 M953.4 118.6 L955.6 113" stroke="#181a20" stroke-width="1.3" fill="none"/>
<path d="M963 109 L972 113.5 L970 116.8 L961.5 112.4 Z" fill="#1b1f3f"/>
<path d="M927.4 112.6 L934.6 115.2 L934.6 118.4 L927.4 115.8 Z" fill="#a9a3ab"/>
<path d="M976.2 121.6 L984.6 124.8 L984.6 127.6 L976.2 124.4 Z" fill="#cfd2cc"/>
<path d="M979 116.5 L987.5 120 L986.8 122.6 L978.4 119 Z" fill="#12163e"/>
</g>
</svg>
<div class="a" style="left:896px;top:182.6px;width:123px;height:58.4px;background:#e4e4ff"></div>
<div class="a" style="left:937.1px;top:182.6px;width:40px;height:58.4px;background:#d8d8ff"></div>
<div class="t" style="left:907.00px;top:186.70px;font-size:6.5px;color:#33333f;transform:scaleX(0.9566);transform-origin:0 0;">Critical</div>
<div class="t" style="left:911.20px;top:211.66px;font-size:12.8px;color:#0c0c18;font-weight:bold;transform:scaleX(0.9692);transform-origin:0 0;">0</div>
<div class="t" style="left:945.95px;top:186.70px;font-size:6.5px;color:#33333f;transform:scaleX(0.9556);transform-origin:0 0;">Warning</div>
<div class="t" style="left:951.90px;top:211.66px;font-size:12.8px;color:#0c0c18;font-weight:bold;transform:scaleX(0.9692);transform-origin:0 0;">0</div>
<div class="t" style="left:982.00px;top:186.70px;font-size:6.5px;color:#33333f;transform:scaleX(0.9933);transform-origin:0 0;">Information</div>
<div class="t" style="left:992.50px;top:211.66px;font-size:12.8px;color:#0c0c18;font-weight:bold;transform:scaleX(0.9692);transform-origin:0 0;">0</div>
<svg class="a" style="left:892px;top:550.6px" width="24" height="24" viewBox="0 0 24 24"><circle cx="12" cy="12" r="10.4" fill="none" stroke="#d2d2ff" stroke-width="1.25"/><path d="M8.8 7.3 V17.1 L15.2 12.2 Z" fill="#fff"/></svg>
<svg class="a" style="left:916px;top:550.6px" width="24" height="24" viewBox="0 0 24 24"><circle cx="12" cy="12" r="10.4" fill="none" stroke="#d2d2ff" stroke-width="1.25"/><text x="6.3" y="15.9" font-family="Liberation Sans" font-weight="bold" font-style="italic" font-size="7.2" fill="#f4f4ff">A</text><text x="10.2" y="15.9" font-family="Liberation Sans" font-weight="bold" font-size="11.8" fill="#fff">A</text></svg>
<svg class="a" style="left:940px;top:550.6px" width="24" height="24" viewBox="0 0 24 24"><circle cx="12" cy="12" r="10.4" fill="none" stroke="#d2d2ff" stroke-width="1.25"/><rect x="6.4" y="6" width="11.2" height="12" fill="none" stroke="#d2d2ff" stroke-width="1.2"/><path d="M16.2 6 V18" stroke="#d2d2ff" stroke-width="0.9"/><text x="8.6" y="15.8" font-family="Liberation Sans" font-weight="bold" font-size="9.6" fill="#f0f0ff">?</text></svg>
<svg class="a" style="left:974.65px;top:550.6px" width="24" height="24" viewBox="0 0 24 24"><circle cx="12" cy="12" r="10.4" fill="none" stroke="#d2d2ff" stroke-width="1.25"/><path d="M7.6 9.6 V6 H13.2 L16.2 8.4 V17.6 H7.6 V14.4" fill="none" stroke="#d2d2ff" stroke-width="1.15"/><path d="M5.5 11.65 H10.7 M8.15 9.2 V14.2" stroke="#d2d2ff" stroke-width="1.3" fill="none"/><circle cx="8.15" cy="11.65" r="1.1" fill="#8c8cc4"/></svg>
<svg class="a" style="left:998.6px;top:550.6px" width="24" height="24" viewBox="0 0 24 24"><circle cx="12" cy="12" r="10.4" fill="none" stroke="#d2d2ff" stroke-width="1.25"/><rect x="6" y="6.6" width="9" height="11.2" fill="#8686be" stroke="#d2d2ff" stroke-width="1.1"/><rect x="7.8" y="5.4" width="5.4" height="2" fill="#d2d2ff"/><path d="M7.4 10 H13 M7.4 12.4 H12" stroke="#a8a8d8" stroke-width="0.7"/><path d="M10.6 16.4 L11.5 13.4 L16.8 8.4 L18.4 10 L13.2 15.2 Z" fill="#fff" stroke="#50508c" stroke-width="0.5"/><path d="M12.3 14.3 L17.6 9.2" stroke="#8c8cc4" stroke-width="0.5"/></svg>
<div class="a" style="left:0;top:574.7px;width:1024px;height:1.3px;background:#26264a"></div>
</body></html>
